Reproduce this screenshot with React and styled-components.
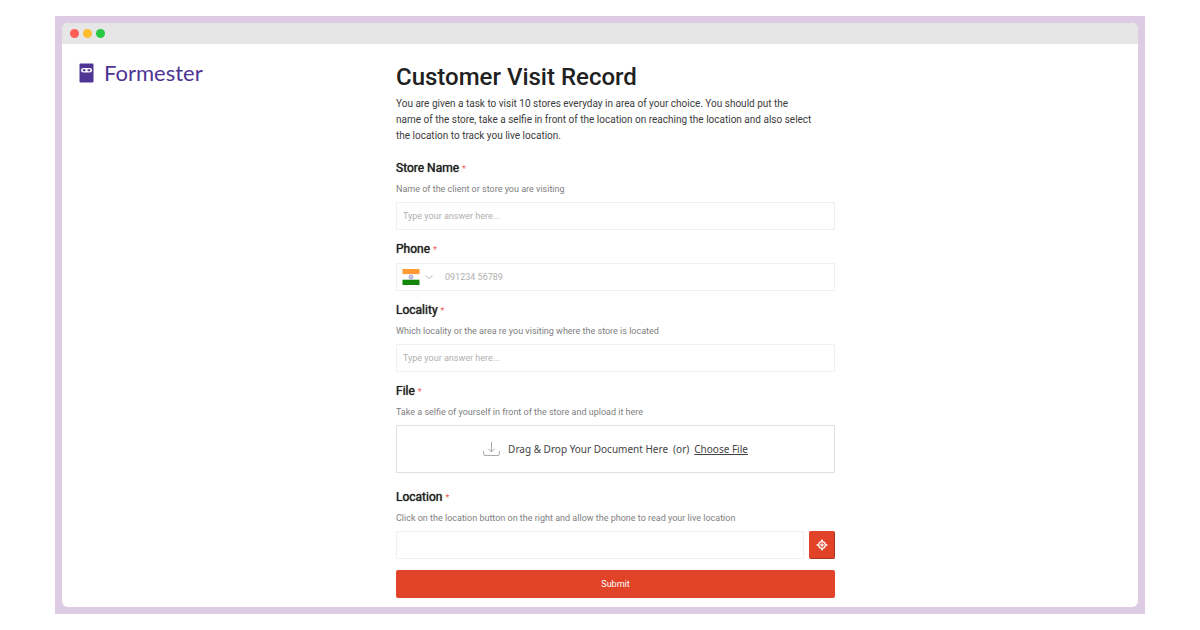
import React from "react";
import styled, { createGlobalStyle } from "styled-components";

const GlobalStyle = createGlobalStyle`
  *, *::before, *::after { box-sizing: border-box; }
  body {
    margin: 0;
    background: #fff;
    color: #212121;
    font-family: Roboto, "Liberation Sans", sans-serif;
  }
  button, input, select { font: inherit; }
`;

const Backdrop = styled.div`
  margin: 16px 55px;
  padding: 7px;
  background: #dccbe3;
`;

const Window = styled.div`
  overflow: hidden;
  border-radius: 6px;
  background: #fff;
`;

const TitleBar = styled.div`
  display: flex;
  align-items: center;
  gap: 4px;
  height: 21px;
  padding: 0 8px;
  background: #e6e6e6;
`;

const Dot = styled.span`
  width: 9px;
  height: 9px;
  border-radius: 50%;
  background: ${(p) => p.$color};
`;

const Page = styled.div`
  display: grid;
  grid-template-columns: 1fr minmax(0, 453px) 1fr;
  padding: 18px 0 9px 17px;
`;

const Brand = styled.a`
  display: flex;
  align-items: center;
  gap: 10px;
  height: 22px;
  color: #4f3594;
  font-family: Lato, sans-serif;
  font-size: 22px;
  line-height: 22px;
  text-decoration: none;
`;

const Form = styled.form`
  display: flex;
  flex-direction: column;
  padding-left: 14px;
`;

const Title = styled.h1`
  margin: 0 0 4px;
  font-size: 24px;
  font-weight: 500;
  line-height: 30px;
`;

const Intro = styled.p`
  margin: 0 0 16px;
  color: #3c3c3c;
  font-size: 10px;
  line-height: 16px;
`;

const Field = styled.div`
  display: flex;
  flex-direction: column;
  margin-bottom: ${(p) => (p.$spacious ? 16 : 11)}px;
`;

const Label = styled.label`
  margin-bottom: 5px;
  font-size: 12px;
  line-height: 16px;
  text-shadow: 0 0 1px currentColor;
`;

const Star = styled.span`
  color: #f2605c;
  font-size: 9px;
  text-shadow: none;
`;

const Help = styled.p`
  margin: 0 0 6px;
  color: #808080;
  font-size: 9px;
  line-height: 14px;
`;

const Input = styled.input`
  flex: 1;
  width: 100%;
  min-width: 0;
  height: 28px;
  min-height: 28px;
  padding: 0 6px;
  border: 1px solid #efefef;
  border-radius: 1px;
  background: #fff;
  color: #333;
  font-size: 9px;
  &::placeholder { color: #b0b0b0; opacity: 1; }
`;

const PhoneBox = styled.div`
  display: flex;
  align-items: center;
  height: 28px;
  border: 1px solid #efefef;
  border-radius: 1px;
`;

const Country = styled.div`
  position: relative;
  display: flex;
  align-items: center;
  gap: 5px;
  padding: 0 6px 0 5px;
`;

const CountrySelect = styled.select`
  position: absolute;
  inset: 0;
  width: 100%;
  opacity: 0;
  cursor: pointer;
`;

const PhoneInput = styled(Input)`
  height: 26px;
  min-height: 26px;
  border: 0;
`;

const DropZone = styled.div`
  display: flex;
  align-items: center;
  justify-content: center;
  height: 48px;
  border: 1px solid #e0e0e0;
  border-radius: 1px;
  color: #444;
  font-family: "Noto Sans", sans-serif;
  font-size: 10px;
`;

const DropText = styled.span`
  margin: 0 5px 0 8px;
`;

const Choose = styled.label`
  margin-left: 5px;
  text-decoration: underline;
  cursor: pointer;
`;

const FileInput = styled.input`
  position: absolute;
  width: 1px;
  height: 1px;
  opacity: 0;
`;

const Row = styled.div`
  display: flex;
  gap: 5px;
`;

const LocateButton = styled.button`
  display: flex;
  align-items: center;
  justify-content: center;
  width: 26px;
  height: 28px;
  padding: 0;
  border: 1px solid;
  border-color: #e14329 #a83220 #a83220 #e14329;
  border-radius: 2px;
  background: #e14329;
  color: #fff;
`;

const Submit = styled.button`
  height: 28px;
  border: 0;
  border-radius: 2px;
  background: #e14329;
  color: #fff;
  font-size: 9px;
`;

const LogoMark = () => (
  <svg width="15" height="20" viewBox="0 0 15 20" aria-hidden="true">
    <rect x="0.5" y="0.5" width="14" height="19" rx="1.2" fill="#4f3594" />
    <rect x="2" y="5" width="11" height="4.6" rx="2.3" fill="#fff" />
    <rect x="3.6" y="6.3" width="3" height="2" rx="1" fill="#4f3594" />
    <rect x="8.4" y="6.3" width="3" height="2" rx="1" fill="#4f3594" />
  </svg>
);

const Flag = () => (
  <svg width="18" height="16" viewBox="0 0 18 16" aria-hidden="true">
    <rect x="0.5" width="17" height="5.3" fill="#ff9933" />
    <rect x="0.5" y="5.3" width="17" height="5.4" fill="#fff" />
    <rect x="0.5" y="10.7" width="17" height="5.3" fill="#138808" />
    <circle cx="9" cy="8" r="2" fill="#e4e4f4" stroke="#8f8fce" strokeWidth="0.8" />
    <circle cx="9" cy="8" r="0.6" fill="#6666bb" />
  </svg>
);

const Chevron = () => (
  <svg width="8" height="6" viewBox="0 0 8 6" fill="none" aria-hidden="true">
    <path d="M.7 1.3 4 4.7 7.3 1.3" stroke="#b4b4b4" strokeWidth="1" />
  </svg>
);

const UploadIcon = () => (
  <svg width="17" height="16" viewBox="0 0 17 16" fill="none" stroke="#aaa" aria-hidden="true">
    <path d="M.7 10v3.2q0 1.3 1.3 1.3h13q1.3 0 1.3-1.3V10" />
    <path d="M8.5 1v9.8M5.3 7.7l3.2 3.2 3.2-3.2" />
  </svg>
);

const TargetIcon = () => (
  <svg width="12" height="12" viewBox="0 0 12 12" fill="none" stroke="#fff" aria-hidden="true">
    <circle cx="6" cy="6" r="3.3" strokeWidth="1.3" />
    <circle cx="6" cy="6" r="1.8" fill="#fff" fillOpacity="0.85" stroke="none" />
    <path d="M6 .5v2.2M6 9.3v2.2M.5 6h2.2M9.3 6h2.2" strokeWidth="1.5" />
  </svg>
);

const FieldLabel = ({ htmlFor, children }) => (
  <Label htmlFor={htmlFor}>
    {children} <Star>*</Star>
  </Label>
);

export default function App() {
  return (
    <>
      <GlobalStyle />
      <Backdrop>
        <Window>
          <TitleBar>
            <Dot $color="#ff5f57" />
            <Dot $color="#febc2e" />
            <Dot $color="#28c840" />
          </TitleBar>
          <Page>
            <Brand href="#">
              <LogoMark />
              Formester
            </Brand>
            <Form onSubmit={(e) => e.preventDefault()}>
              <Title>Customer Visit Record</Title>
              <Intro>
                You are given a task to visit 10 stores everyday in area of your choice. You should put the
                <br />
                name of the store, take a selfie in front of the location on reaching the location and also select
                <br />
                the location to track you live location.
              </Intro>

              <Field>
                <FieldLabel htmlFor="store">Store Name</FieldLabel>
                <Help>Name of the client or store you are visiting</Help>
                <Input id="store" placeholder="Type your answer here..." />
              </Field>

              <Field>
                <FieldLabel htmlFor="phone">Phone</FieldLabel>
                <PhoneBox>
                  <Country>
                    <Flag />
                    <Chevron />
                    <CountrySelect aria-label="Country">
                      <option>India</option>
                    </CountrySelect>
                  </Country>
                  <PhoneInput id="phone" type="tel" placeholder="091234 56789" />
                </PhoneBox>
              </Field>

              <Field>
                <FieldLabel htmlFor="locality">Locality</FieldLabel>
                <Help>Which locality or the area re you visiting where the store is located</Help>
                <Input id="locality" placeholder="Type your answer here..." />
              </Field>

              <Field $spacious>
                <FieldLabel htmlFor="file">File</FieldLabel>
                <Help>Take a selfie of yourself in front of the store and upload it here</Help>
                <DropZone>
                  <UploadIcon />
                  <DropText>Drag &amp; Drop Your Document Here</DropText>
                  (or)
                  <Choose>
                    Choose File
                    <FileInput id="file" type="file" />
                  </Choose>
                </DropZone>
              </Field>

              <Field>
                <FieldLabel htmlFor="location">Location</FieldLabel>
                <Help>Click on the location button on the right and allow the phone to read your live location</Help>
                <Row>
                  <Input id="location" />
                  <LocateButton type="button" aria-label="Use my location">
                    <TargetIcon />
                  </LocateButton>
                </Row>
              </Field>

              <Submit type="submit">Submit</Submit>
            </Form>
          </Page>
        </Window>
      </Backdrop>
    </>
  );
}
